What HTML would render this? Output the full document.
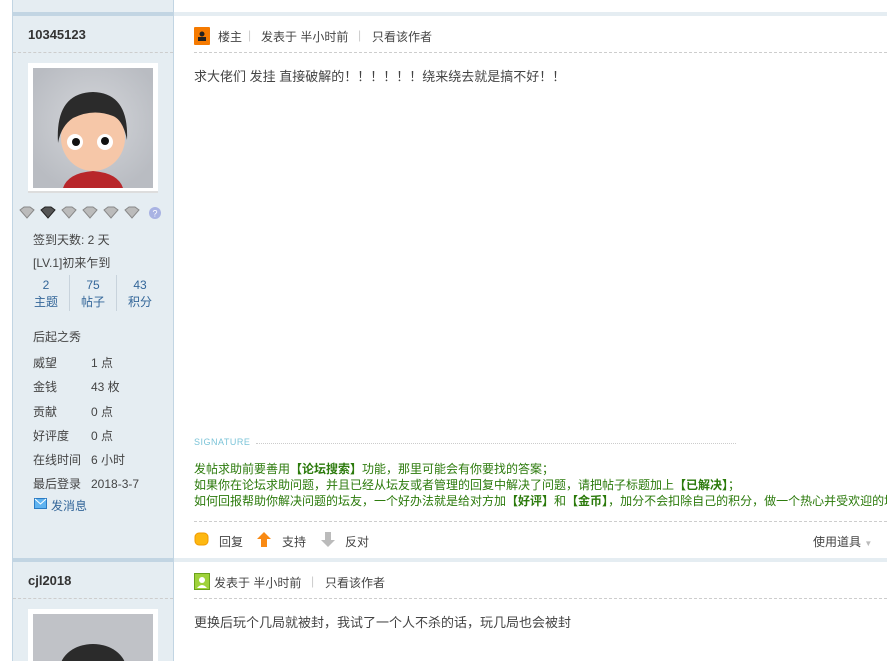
<!DOCTYPE html>
<html style="width:887px;height:661px;overflow:hidden"><head><meta charset="utf-8">
<style>
*{margin:0;padding:0;box-sizing:border-box}
body{width:887px;height:661px;overflow:hidden;background:#fff;font-family:"Liberation Sans","Noto Sans CJK SC",sans-serif;font-size:12px;color:#444;position:relative}
.a{position:absolute;white-space:nowrap}
.side{position:absolute;left:12px;width:162px;background:#e5edf2;border-left:1px solid #c2d5e3;border-right:1px solid #c2d5e3}
.dash{position:absolute;border-top:1px dashed #cdcdcd}
.g{color:#2b7a0b}
</style></head><body>
<div class="side" style="top:0;height:558px"></div>
<div class="side" style="top:562px;height:99px"></div>
<div class="a" style="left:12px;top:12px;width:162px;height:4px;background:#c2d5e3"></div>
<div class="a" style="left:174px;top:12px;width:713px;height:4px;background:#e5edf2"></div>
<div class="a" style="left:12px;top:558px;width:162px;height:4px;background:#c2d5e3"></div>
<div class="a" style="left:174px;top:558px;width:713px;height:4px;background:#e5edf2"></div>

<div class="a" style="left:28px;top:27px;font-weight:bold;font-size:13px;color:#333">10345123</div>
<div class="dash" style="left:13px;top:52px;width:160px"></div>
<div class="a" style="left:28px;top:63px;width:130px;height:130px;background:#fff;border-bottom:2px solid #ddd;padding:5px">
<svg width="120" height="120" viewBox="0 0 120 120"><defs><radialGradient id="bg" cx="50%" cy="45%" r="60%"><stop offset="0" stop-color="#d4d6da"/><stop offset="1" stop-color="#b9bcc2"/></radialGradient></defs>
<rect width="120" height="120" fill="url(#bg)"/>
<path d="M30 120 Q35 105 60 103 Q85 105 90 120Z" fill="#b8262a"/>
<ellipse cx="60" cy="70" rx="32" ry="33" fill="#f6c7a8"/>
<path d="M25 75 Q22 25 60 24 Q96 25 94 72 Q90 52 80 48 Q60 40 40 50 Q28 58 25 75Z" fill="#2b2b2b"/>
<circle cx="42" cy="74" r="8" fill="#fff"/><circle cx="72" cy="74" r="8" fill="#fff"/>
<circle cx="43" cy="74" r="4" fill="#111"/><circle cx="72" cy="73" r="4" fill="#111"/>
</svg></div>
<svg class="a" style="left:18px;top:205px" width="150" height="16">
<g fill="#bbb" stroke="#888" stroke-width="1">
<path d="M2 5 L6 2 L12 2 L16 5 L9 13Z"/><path d="M23 5 L27 2 L33 2 L37 5 L30 13Z" fill="#555" stroke="#222"/><path d="M44 5 L48 2 L54 2 L58 5 L51 13Z"/><path d="M65 5 L69 2 L75 2 L79 5 L72 13Z"/><path d="M86 5 L90 2 L96 2 L100 5 L93 13Z"/><path d="M107 5 L111 2 L117 2 L121 5 L114 13Z"/></g>
<circle cx="137" cy="8" r="6" fill="#a9b3e3"/><text x="134.5" y="11.5" font-size="9" fill="#fff">?</text></svg>
<div class="a" style="left:33px;top:231px">签到天数: 2 天</div>
<div class="a" style="left:33px;top:254px">[LV.1]初来乍到</div>
<div class="a" style="left:28px;top:277px;width:36px;text-align:center;color:#336699;line-height:17px">2<br>主题</div>
<div class="a" style="left:75px;top:277px;width:36px;text-align:center;color:#336699;line-height:17px">75<br>帖子</div>
<div class="a" style="left:122px;top:277px;width:36px;text-align:center;color:#336699;line-height:17px">43<br>积分</div>
<div class="a" style="left:69px;top:275px;width:1px;height:36px;background:#c8d3dc"></div>
<div class="a" style="left:116px;top:275px;width:1px;height:36px;background:#c8d3dc"></div>
<div class="a" style="left:33px;top:328px">后起之秀</div>
<div class="a" style="left:33px;top:351px;line-height:24.3px">威望<br>金钱<br>贡献<br>好评度<br>在线时间<br>最后登录</div>
<div class="a" style="left:91px;top:351px;line-height:24.3px">1 点<br>43 枚<br>0 点<br>0 点<br>6 小时<br>2018-3-7</div>
<svg class="a" style="left:34px;top:498px" width="13" height="11"><rect x=".5" y=".5" width="12" height="10" fill="#5fb3f0" stroke="#2a7bc4"/><path d="M1 1 L6.5 6 L12 1" fill="none" stroke="#fff"/></svg>
<div class="a" style="left:51px;top:497px;color:#336699">发消息</div>

<svg class="a" style="left:194px;top:27px" width="16" height="19"><rect width="16" height="18" rx="1" fill="#f57a00"/><circle cx="8" cy="7" r="2.5" fill="#222"/><rect x="4" y="10" width="8" height="4" fill="#222"/></svg>
<div class="a" style="left:218px;top:28px">楼主</div>
<div class="a" style="left:248px;top:28px;color:#ccc">|</div>
<div class="a" style="left:261px;top:28px">发表于 半小时前</div>
<div class="a" style="left:358px;top:28px;color:#ccc">|</div>
<div class="a" style="left:372px;top:28px">只看该作者</div>
<div class="dash" style="left:194px;top:52px;width:693px"></div>
<div class="a" style="left:194px;top:66px;font-size:13px">求大佬们 发挂 直接破解的！！！！！！绕来绕去就是搞不好！！</div>

<div class="a" style="left:194px;top:437px;font-size:9px;color:#7cc4d8;letter-spacing:.5px">SIGNATURE</div>
<div class="dash" style="left:256px;top:443px;width:480px;border-color:#ccc;border-top-style:dotted"></div>
<div class="a g" style="left:194px;top:461px;line-height:16px">发帖求助前要善用<b>【论坛搜索】</b>功能，那里可能会有你要找的答案；<br>如果你在论坛求助问题，并且已经从坛友或者管理的回复中解决了问题，请把帖子标题加上<b>【已解决】</b>；<br>如何回报帮助你解决问题的坛友，一个好办法就是给对方加<b>【好评】</b>和<b>【金币】</b>，加分不会扣除自己的积分，做一个热心并受欢迎的坛友</div>
<div class="dash" style="left:194px;top:521px;width:693px"></div>
<svg class="a" style="left:194px;top:532px" width="16" height="16"><rect x="1" y="1" width="13" height="12" rx="4" fill="#fdb812" stroke="#f09a00"/></svg>
<div class="a" style="left:219px;top:533px">回复</div>
<svg class="a" style="left:256px;top:531px" width="16" height="17"><path d="M8 1 L15 8 L11 8 L11 16 L5 16 L5 8 L1 8Z" fill="#f98a13"/></svg>
<div class="a" style="left:282px;top:533px">支持</div>
<svg class="a" style="left:320px;top:531px" width="16" height="17"><path d="M8 16 L15 9 L11 9 L11 1 L5 1 L5 9 L1 9Z" fill="#bbb"/></svg>
<div class="a" style="left:345px;top:533px">反对</div>
<div class="a" style="left:813px;top:533px">使用道具 <span style="color:#bbb;font-size:8px">▼</span></div>

<div class="a" style="left:28px;top:573px;font-weight:bold;font-size:13px;color:#333">cjl2018</div>
<div class="dash" style="left:13px;top:598px;width:160px"></div>
<div class="a" style="left:28px;top:609px;width:130px;height:52px;background:#fff;padding:5px 5px 0;overflow:hidden">
<svg width="120" height="60"><rect width="120" height="60" fill="#c0c2c7"/><ellipse cx="60" cy="55" rx="33" ry="25" fill="#2b2b2b"/></svg></div>
<svg class="a" style="left:194px;top:573px" width="16" height="17"><rect x=".5" y=".5" width="15" height="16" fill="#9fd23a" stroke="#6aa21a"/><circle cx="8" cy="7" r="3" fill="#fff"/><path d="M3 15 Q8 9 13 15Z" fill="#fff"/></svg>
<div class="a" style="left:214px;top:574px">发表于 半小时前</div>
<div class="a" style="left:311px;top:574px;color:#ccc">|</div>
<div class="a" style="left:325px;top:574px">只看该作者</div>
<div class="dash" style="left:194px;top:598px;width:693px"></div>
<div class="a" style="left:194px;top:612px;font-size:13px">更换后玩个几局就被封，我试了一个人不杀的话，玩几局也会被封</div>
</body></html>
